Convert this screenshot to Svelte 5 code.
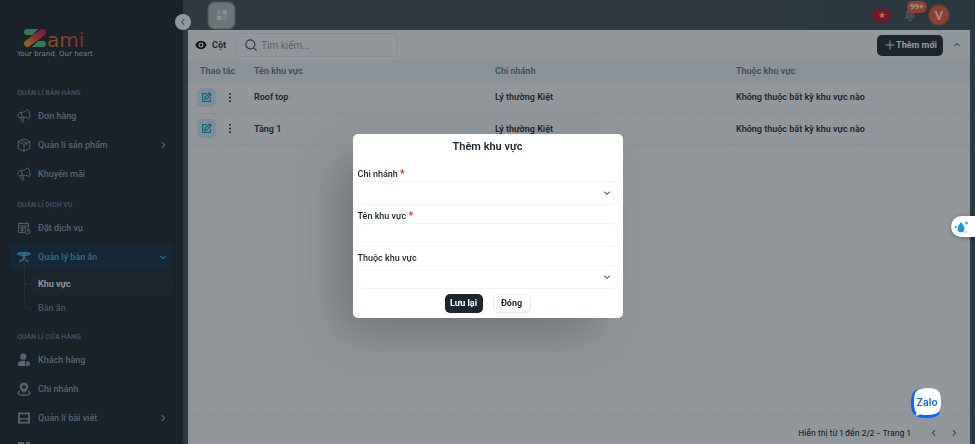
<script>
    let search = $state('');
    let dialogOpen = $state(true);
    let branch = $state('');
    let areaName = $state('');
    let parentArea = $state('');

    const groups = [
        {
            title: 'QUẢN LÍ BÁN HÀNG',
            items: [
                { label: 'Đơn hàng', icon: 'horn' },
                { label: 'Quản lí sản phẩm', icon: 'box', more: true },
                { label: 'Khuyến mãi', icon: 'horn' }
            ]
        },
        {
            title: 'QUẢN LÍ DỊCH VỤ',
            items: [
                { label: 'Đặt dịch vụ', icon: 'calendar' },
                { label: 'Quản lý bàn ăn', icon: 'table', active: true, children: ['Khu vực', 'Bàn ăn'] }
            ]
        },
        {
            title: 'QUẢN LÍ CỬA HÀNG',
            items: [
                { label: 'Khách hàng', icon: 'user' },
                { label: 'Chi nhánh', icon: 'pin' },
                { label: 'Quản lí bài viết', icon: 'post', more: true },
                { label: '', icon: 'grid' }
            ]
        }
    ];

    const rows = [
        { name: 'Roof top', branch: 'Lý thường Kiệt', parent: 'Không thuộc bất kỳ khu vực nào' },
        { name: 'Tầng 1', branch: 'Lý thường Kiệt', parent: 'Không thuộc bất kỳ khu vực nào' }
    ];

    const closeDialog = () => {
        dialogOpen = false;
    };
</script>

{#snippet chevron(d)}
    <svg class="chevron" viewBox="0 0 10 10"><path {d} /></svg>
{/snippet}

{#snippet menuIcon(name)}
    <svg class="menu-icon" viewBox="0 0 14 14">
        {#if name === 'horn'}
            <g class="line">
                <path d="M4.2 3.4C6.500 3.400 8.500 2.500 10 1.200c.6-.5 1.300-.3 1.600.4 1 2 1.500 4.500 1.300 6.900-.1.800-.8 1.200-1.500.8C9.700 8.400 7.600 8 5.300 8.400" />
                <path d="M4.200 3.400 3 3.700C1.300 4.200.6 5.700 1 7.200c.4 1.300 1.600 1.900 3 1.500l1.300-.3-1.100-5" />
                <path d="m3.600 8.900 1.300 3.600c.2.6.8.8 1.300.6.600-.2.800-.8.600-1.300L5.900 8.500" />
            </g>
        {:else if name === 'box'}
            <path class="line" d="M7 .8 12.800 3.600v7L7 13.400 1.200 10.600v-7zM1.200 3.600 7 6.400l5.800-2.800M7 6.400v7M4 2.200l5.800 2.900v2.600" />
        {:else if name === 'calendar'}
            <path class="line" d="M1.500 2.500h10v5M1.500 2.500v9h6M1.500 5h10M4 1v2.400M9 1v2.400M3 7h6M3 9.300h4.500M5.200 5.500v5.500M8 5.500V8" />
            <circle class="line" cx="10.600" cy="10.600" r="2.400" />
            <path class="line" d="M10.600 9.300v1.500h1" />
        {:else if name === 'table'}
            <path d="M0 3.800C0 2.500 3 1.800 7 1.800s7 .7 7 2-2.900 2-5.800 2.200v2.500l3.800 2.800-.9 1-3.100-1.900H6l-3.100 1.900-.9-1 3.800-2.800V6C2.900 5.800 0 5.100 0 3.800z" />
        {:else if name === 'user'}
            <circle cx="6.300" cy="3.700" r="3.100" />
            <path d="M.8 11.500C.8 9 3 7.800 6 7.800c.9 0 1.700.1 2.400.4-.7 1.200-.6 3.400.5 4.800H2.500c-1 0-1.700-.6-1.700-1.500z" />
            <path d="M10.800 8.300v4.900M8.700 9.500l4.200 2.500M12.900 9.500 8.700 12" stroke="currentColor" stroke-width="1.600" />
        {:else if name === 'pin'}
            <path fill-rule="evenodd" d="M7 .6a4.300 4.300 0 0 1 4.300 4.300C11.300 7.600 8.400 9.300 7 11 5.600 9.300 2.700 7.600 2.700 4.900A4.300 4.300 0 0 1 7 .6zm0 2.500a1.900 1.900 0 1 0 0 3.800 1.900 1.900 0 0 0 0-3.800z" />
            <path fill="none" stroke="currentColor" stroke-width="1.400" d="M3 9.300c-3 1.200-2.800 4 4 4s7-2.800 4-4" />
        {:else if name === 'post'}
            <path fill-rule="evenodd" d="M1 1.500h12v11H1zM2.800 3.200v4h8.400v-4zm0 5.600v2h8.400v-2z" />
        {:else}
            <path d="M1 2h6v5H1zM9 2h4v5H9zM1 8.500h5v4H1zM8 8.500h5v4H8z" />
        {/if}
    </svg>
{/snippet}

<div class="app">
    <aside class="sidebar">
        <a class="logo" href="#home" aria-label="Zami">
            <svg viewBox="0 0 74 24">
                <defs>
                    <linearGradient id="z-stroke" x1="0" y1="1" x2="1" y2="0">
                        <stop offset="0" stop-color="#f59a1b" />
                        <stop offset=".5" stop-color="#ec4a28" />
                        <stop offset="1" stop-color="#d4145a" />
                    </linearGradient>
                    <linearGradient id="name-fill">
                        <stop offset="0" stop-color="#f07a1f" />
                        <stop offset="1" stop-color="#d9303c" />
                    </linearGradient>
                </defs>
                <path d="M10 3h11l-5 6h-6a3 3 0 0 1 0-6zM21 15h5a3 3 0 0 1 0 6H15z" fill="#4cc480" />
                <path d="M10.500 17.500 25.500 6.500" stroke="url(#z-stroke)" stroke-width="7" stroke-linecap="round" />
                <text class="logo-name" x="30" y="21">ami</text>
            </svg>
            <span>Your brand, Our heart</span>
        </a>
        <nav>
            {#each groups as group}
                <section class="group">
                    <h2>{group.title}</h2>
                    <ul>
                        {#each group.items as item}
                            <li>
                                <a class="item" class:active={item.active} href="#menu">
                                    {@render menuIcon(item.icon)}
                                    <span>{item.label}</span>
                                    {#if item.more}
                                        {@render chevron('M3.500 1.500 7 5 3.500 8.500')}
                                    {:else if item.active}
                                        {@render chevron('M1.500 3.500 5 7 8.500 3.500')}
                                    {/if}
                                </a>
                                {#if item.children}
                                    <ul class="submenu">
                                        {#each item.children as child, i}
                                            <li><a class:selected={i === 0} href="#area">{child}</a></li>
                                        {/each}
                                    </ul>
                                {/if}
                            </li>
                        {/each}
                    </ul>
                </section>
            {/each}
        </nav>
        <button class="collapse" aria-label="Thu gọn">{@render chevron('M6.500 1.500 3.500 5 6.500 8.500')}</button>
    </aside>

    <div class="content">
        <header class="topbar">
            <button class="apps" aria-label="Ứng dụng">
                <svg viewBox="0 0 12 12">
                    <rect x="1" y="1" width="4.500" height="4.500" rx="1" opacity=".5" />
                    <rect x="6.500" y="1" width="4.500" height="4.500" rx="1" />
                    <rect x="1" y="6.500" width="4.500" height="4.500" rx="1" />
                    <rect x="6.500" y="6.500" width="4.500" height="4.500" rx="1" opacity=".5" />
                </svg>
            </button>
            <div class="account">
                <svg class="flag" viewBox="0 0 16 12">
                    <rect width="16" height="12" rx="2" fill="#d80027" />
                    <path fill="#ffda44" d="m8 2.500.9 2.500h2.600L9.400 6.600l.8 2.600L8 7.700 5.800 9.200l.8-2.600L4.500 5h2.600z" />
                </svg>
                <button class="bell" aria-label="Thông báo">
                    <svg viewBox="0 0 12 14"><path d="M6 1c2.500 0 4 1.800 4 4v3l1.500 2.500H.5L2 8V5c0-2.200 1.500-4 4-4zM4 11.500h4a2 2 0 0 1-4 0z" /></svg>
                    <span class="count">99+</span>
                </button>
                <button class="avatar">V</button>
            </div>
        </header>

        <main class="panel">
            <div class="toolbar">
                <button class="columns">
                    <svg viewBox="0 0 12 10"><path fill-rule="evenodd" d="M6 .8c3 0 5 2.200 5.700 4.200C11 7 9 9.200 6 9.200S1 7 .3 5C1 3 3 .8 6 .8zm0 1.700a2.500 2.500 0 1 0 0 5 2.500 2.500 0 0 0 0-5z" /><circle cx="6" cy="5" r="1.300" /></svg>
                    Cột
                </button>
                <label class="search">
                    <svg viewBox="0 0 12 12"><circle cx="5.300" cy="5.300" r="4.500" /><path d="m8.600 8.600 2.900 2.900" /></svg>
                    <input type="text" placeholder="Tìm kiếm..." aria-label="Tìm kiếm" bind:value={search} />
                </label>
                <button class="add" onclick={() => (dialogOpen = true)}>
                    <svg viewBox="0 0 10 10"><path d="M5 .5v9M.5 5h9" /></svg>
                    Thêm mới
                </button>
                <button class="fold" aria-label="Thu gọn bộ lọc">{@render chevron('M1.500 6.500 5 3 8.500 6.500')}</button>
            </div>

            <table>
                <thead>
                    <tr>
                        <th class="actions-col">Thao tác</th>
                        <th>Tên khu vực</th>
                        <th>Chi nhánh</th>
                        <th>Thuộc khu vực</th>
                    </tr>
                </thead>
                <tbody>
                    {#each rows as row}
                        <tr>
                            <td>
                                <div class="actions">
                                    <button class="edit" aria-label="Sửa">
                                        <svg viewBox="0 0 12 12"><path d="M6.500 1.800H1.800v8.400h8.400V6M4 8l.5-2.200L9.300 1l1.700 1.700-4.800 4.800zM8.300 2l1.700 1.700" /></svg>
                                    </button>
                                    <button class="dots" aria-label="Thêm thao tác">
                                        <svg viewBox="0 0 4 12"><circle cx="2" cy="2" r="1" /><circle cx="2" cy="6" r="1" /><circle cx="2" cy="10" r="1" /></svg>
                                    </button>
                                </div>
                            </td>
                            <td>{row.name}</td>
                            <td>{row.branch}</td>
                            <td>{row.parent}</td>
                        </tr>
                    {/each}
                </tbody>
            </table>

            <footer class="pager">
                <span>Hiển thị từ 1 đến 2/2 - Trang 1</span>
                <button aria-label="Trang trước">{@render chevron('M6.500 1.500 3 5 6.500 8.500')}</button>
                <button aria-label="Trang sau">{@render chevron('M3.500 1.500 7 5 3.500 8.500')}</button>
            </footer>
        </main>
    </div>
</div>

{#if dialogOpen}
    <div class="backdrop">
        <form class="dialog" role="dialog" aria-labelledby="dialog-title" onsubmit={(e) => e.preventDefault()}>
            <h1 id="dialog-title">Thêm khu vực</h1>
            <div class="field">
                <label for="branch">Chi nhánh <em>*</em></label>
                <div class="select">
                    <select id="branch" bind:value={branch}><option value=""></option></select>
                    {@render chevron('M1.500 3.500 5 6.500 8.500 3.500')}
                </div>
            </div>
            <div class="field">
                <label for="area-name">Tên khu vực <em>*</em></label>
                <input id="area-name" type="text" bind:value={areaName} />
            </div>
            <div class="field">
                <label for="parent-area">Thuộc khu vực</label>
                <div class="select">
                    <select id="parent-area" bind:value={parentArea}><option value=""></option></select>
                    {@render chevron('M1.500 3.500 5 6.500 8.500 3.500')}
                </div>
            </div>
            <div class="buttons">
                <button class="save" type="submit">Lưu lại</button>
                <button class="cancel" type="button" onclick={closeDialog}>Đóng</button>
            </div>
        </form>
    </div>
{/if}

<button class="drops" aria-label="Trợ lý">
    <svg viewBox="0 0 16 14">
        <path d="M7 2c2 2.800 3.500 4.600 3.500 6.800a3.500 3.500 0 0 1-7 0C3.500 6.600 5 4.800 7 2z" fill="#1597e5" />
        <circle cx="12.500" cy="3" r="1.500" fill="#35b3f5" />
        <circle cx="1.800" cy="7" r="1.200" fill="#35b3f5" />
        <circle cx="11.800" cy="12" r="1" fill="#8ad2f8" />
    </svg>
</button>

<a class="zalo" href="#zalo" aria-label="Zalo">
    <svg viewBox="0 0 32 32">
        <path d="M15 1C5 1 1 5 1 16s4 15 15 15c7 0 11-1 14-5L8 4z" fill="#0068ff" />
        <path d="M17.500 1C28 1 31 4 31 14.500S28 28 17.500 28c-3 0-5.500-.1-7.500-.8-1.500 1.300-3.500 1.500-5 1.300 1.200-.7 1.500-1.600 1.300-2.700C4.500 23.500 4 20 4 14.500 4 4 7 1 17.500 1z" fill="#fff" />
        <text x="17" y="19">Zalo</text>
    </svg>
</a>

<style>
    :global(body) {
        margin: 0;
        font-family: Roboto, Inter, "Liberation Sans", sans-serif;
        font-size: 9px;
        color: #1c252e;
    }

    * {
        box-sizing: border-box;
    }

    button,
    input,
    select {
        font: inherit;
        color: inherit;
        border: none;
        background: none;
        padding: 0;
        margin: 0;
        outline: none;
    }

    button {
        cursor: pointer;
    }

    a {
        color: inherit;
        text-decoration: none;
    }

    ul {
        list-style: none;
        margin: 0;
        padding: 0;
    }

    svg {
        display: block;
        flex: none;
    }

    .chevron {
        width: 8px;
        height: 8px;
        fill: none;
        stroke: currentColor;
        stroke-width: 1.4;
    }

    .app {
        display: flex;
        height: 100vh;
        background: linear-gradient(90deg, #4a4a50, #3b4a50);
    }

    /* sidebar */
    .sidebar {
        position: relative;
        flex: none;
        width: 183px;
        padding: 26px 10px 0;
        background: #171e25;
        color: #919eab;
    }

    .logo {
        display: block;
        height: 55px;
        padding-left: 7px;
    }

    .logo svg {
        width: 74px;
        height: 24px;
        overflow: visible;
    }

    .logo-name {
        font: 20px "DejaVu Sans", sans-serif;
        fill: url(#name-fill);
    }

    .logo span {
        display: block;
        font: 7px "DejaVu Sans", sans-serif;
        line-height: 8px;
        color: #c4cdd5;
        white-space: nowrap;
    }

    nav {
        height: calc(100vh - 81px);
        overflow: hidden;
    }

    .group {
        padding-top: 6px;
        margin-bottom: 6px;
    }

    h2 {
        margin: 0 0 3px;
        padding-left: 7px;
        font-size: 7px;
        line-height: 12px;
        font-weight: 700;
        color: #637381;
    }

    .item {
        display: flex;
        align-items: center;
        gap: 7px;
        height: 27px;
        margin-bottom: 2px;
        padding: 0 6px 0 7px;
        border-radius: 4px;
        font-weight: 500;
    }

    .item span {
        flex: 1;
    }

    .item.active {
        background: #112a3c;
        color: #3fa5d8;
        font-weight: 600;
    }

    .menu-icon {
        width: 14px;
        height: 14px;
        fill: currentColor;
    }

    .line {
        fill: none;
        stroke: currentColor;
        stroke-width: 0.9;
    }

    .submenu {
        display: flex;
        flex-direction: column;
        gap: 2px;
        margin-left: 14px;
        padding: 1px 0 0 7px;
    }

    .submenu li {
        position: relative;
    }

    .submenu li::before {
        content: '';
        position: absolute;
        left: -7px;
        top: -14px;
        width: 7px;
        height: 25px;
        border-left: 1px solid #2c353d;
        border-bottom: 1px solid #2c353d;
        border-radius: 0 0 0 4px;
    }

    .submenu a {
        display: block;
        padding-left: 7px;
        border-radius: 4px;
        line-height: 22px;
        font-weight: 500;
        color: #75818d;
    }

    .submenu a.selected {
        background: #20252e;
        color: #fff;
        font-weight: 600;
    }

    .collapse {
        position: absolute;
        top: 14px;
        right: -8px;
        display: grid;
        place-items: center;
        width: 16px;
        height: 16px;
        border-radius: 50%;
        background: #fff;
        color: #637381;
    }

    /* content */
    .content {
        flex: 1;
        min-width: 0;
        display: flex;
        flex-direction: column;
        padding: 0 5px;
    }

    .topbar {
        display: flex;
        align-items: center;
        justify-content: space-between;
        height: 30px;
        padding: 0 21px 0 20px;
    }

    .apps {
        display: grid;
        place-items: center;
        width: 27px;
        height: 27px;
        border: 1px solid #95989b;
        border-radius: 7px;
        background: #b9bcbd;
        box-shadow: 0 0 2px #b9bcbd;
    }

    .apps svg {
        width: 12px;
        height: 12px;
        fill: #f0f2f2;
    }

    .account {
        display: flex;
        align-items: center;
    }

    .flag {
        width: 16px;
        height: 12px;
        margin-right: 14px;
    }

    .bell {
        position: relative;
        margin-right: 13px;
    }

    .bell svg {
        width: 12px;
        height: 14px;
        fill: #637381;
    }

    .count {
        position: absolute;
        left: 3px;
        top: -7px;
        padding: 0 3px;
        border-radius: 6px;
        background: #ff5630;
        color: #fff;
        font-size: 8px;
        line-height: 12px;
        font-weight: 700;
    }

    .avatar {
        width: 20px;
        height: 20px;
        border-radius: 50%;
        background: #ff5630;
        outline: 1px solid #6f6b4d;
        color: #fff;
        font-size: 13px;
        font-weight: 500;
    }

    .panel {
        flex: 1;
        display: flex;
        flex-direction: column;
        background: #fff;
    }

    .toolbar {
        display: flex;
        align-items: center;
        height: 30px;
        padding: 0 9px 0 7px;
    }

    .columns {
        display: flex;
        align-items: center;
        gap: 5px;
        margin-right: 9px;
        font-weight: 700;
    }

    .columns svg {
        width: 12px;
        height: 10px;
    }

    .search {
        display: flex;
        align-items: center;
        gap: 4px;
        width: 163px;
        height: 24px;
        padding: 0 9px;
        border: 1px solid #eceef0;
        border-radius: 5px;
    }

    .search svg {
        width: 12px;
        height: 12px;
        fill: none;
        stroke: #454f5b;
        stroke-width: 1.2;
    }

    .search input {
        flex: 1;
        min-width: 0;
        font-size: 10px;
    }

    .search input::placeholder {
        color: #919eab;
    }

    .add {
        display: flex;
        align-items: center;
        gap: 1px;
        height: 21px;
        margin-left: auto;
        padding: 0 6px 0 8px;
        border-radius: 5px;
        background: #1c252e;
        color: #fff;
        font-weight: 700;
    }

    .add svg {
        width: 10px;
        height: 10px;
        stroke: #fff;
    }

    .fold {
        margin-left: 10px;
        color: #00a7c7;
    }

    table {
        width: 100%;
        table-layout: fixed;
        border-collapse: collapse;
    }

    th,
    td {
        padding: 0 7px;
        text-align: left;
        font-weight: 600;
    }

    th {
        height: 22px;
        background: #f1f5fa;
        color: #637381;
    }

    .actions-col {
        width: 59px;
        padding: 0 0 0 12px;
    }

    td {
        height: 31px;
        border-bottom: 1px dashed #eceff2;
    }

    td:first-child {
        padding-left: 9px;
    }

    .actions {
        display: flex;
        align-items: center;
        gap: 12px;
    }

    .edit {
        display: grid;
        place-items: center;
        width: 19px;
        height: 19px;
        border-radius: 5px;
        background: #dceaf6;
    }

    .edit svg {
        width: 11px;
        height: 11px;
        fill: none;
        stroke: #00a6c8;
        stroke-width: 1.3;
    }

    .dots svg {
        width: 4px;
        height: 11px;
    }

    .pager {
        display: flex;
        align-items: center;
        justify-content: flex-end;
        gap: 12px;
        height: 30px;
        margin-top: auto;
        padding: 6px 12px 0 0;
        border-top: 1px dashed #eceff2;
        font-family: Inter, Roboto, sans-serif;
        font-size: 8px;
        font-weight: 500;
    }

    .pager span {
        margin-right: 8px;
    }

    .pager button {
        color: #637381;
    }

    /* dialog */
    .backdrop {
        position: fixed;
        inset: 0;
        display: grid;
        place-items: center;
        padding-top: 7px;
        background: rgba(28, 37, 46, 0.48);
    }

    .dialog {
        width: 270px;
        padding: 5px;
        border-radius: 5px;
        background: #fff;
        box-shadow: -20px 20px 50px -4px rgba(0, 0, 0, 0.24);
    }

    h1 {
        margin: 0 0 13px;
        font-size: 11px;
        line-height: 16px;
        font-weight: 600;
        text-align: center;
    }

    .field {
        margin-bottom: 5px;
    }

    .field label {
        display: block;
        margin-bottom: 1px;
        line-height: 12px;
        font-weight: 500;
    }

    .field em {
        color: #ff2020;
        font-size: 10px;
        font-style: normal;
        font-weight: 700;
        line-height: 8px;
    }

    .field input,
    .field select {
        display: block;
        width: 100%;
        height: 24px;
        padding: 0 8px;
        border: 1px solid #f0f2f4;
        border-radius: 5px;
        appearance: none;
    }

    .select {
        position: relative;
    }

    .select .chevron {
        position: absolute;
        top: 8px;
        right: 7px;
        color: #637381;
        pointer-events: none;
    }

    .buttons {
        display: flex;
        justify-content: center;
        gap: 10px;
    }

    .buttons button {
        min-width: 38px;
        height: 19px;
        border-radius: 5px;
        font-weight: 700;
    }

    .save {
        background: #1c252e;
        color: #fff;
    }

    .buttons .cancel {
        border: 1px solid #e8eaed;
    }

    /* floating widgets */
    .drops {
        position: fixed;
        right: 0;
        top: 216px;
        width: 24px;
        height: 21px;
        padding-left: 3px;
        border-radius: 11px 0 0 11px;
        background: #fff;
        box-shadow: 0 1px 4px rgba(0, 0, 0, 0.3);
    }

    .drops svg {
        width: 16px;
        height: 14px;
    }

    .zalo {
        position: fixed;
        right: 33px;
        bottom: 25px;
    }

    .zalo svg {
        width: 32px;
        height: 32px;
    }

    .zalo text {
        font: 600 10px Inter, sans-serif;
        fill: #0068ff;
        text-anchor: middle;
    }
</style>
